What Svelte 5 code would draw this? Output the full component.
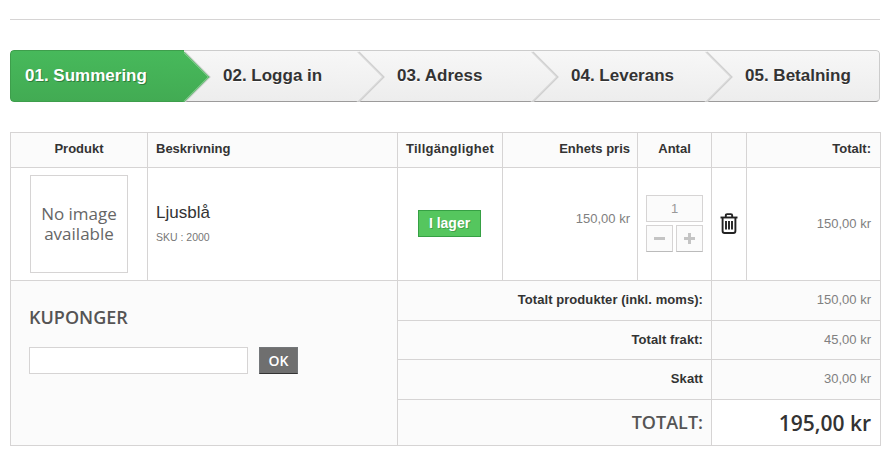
<script>
  const steps = ["01. Summering", "02. Logga in", "03. Adress", "04. Leverans", "05. Betalning"];
  const totals = [
    { label: "Totalt produkter (inkl. moms):", value: "150,00 kr" },
    { label: "Totalt frakt:", value: "45,00 kr" },
    { label: "Skatt", value: "30,00 kr" }
  ];
</script>

<div class="page">
  <hr />

  <ul class="steps">
    {#each steps as step, i}
      <li class="step" class:active={i === 0}><span>{step}</span></li>
    {/each}
  </ul>

  <table>
    <colgroup>
      <col class="c-product" />
      <col class="c-desc" />
      <col class="c-avail" />
      <col class="c-unit" />
      <col class="c-qty" />
      <col class="c-del" />
      <col class="c-total" />
    </colgroup>
    <thead>
      <tr>
        <th class="center">Produkt</th>
        <th>Beskrivning</th>
        <th class="center wide">Tillgänglighet</th>
        <th class="right unit">Enhets pris</th>
        <th class="center">Antal</th>
        <th></th>
        <th class="right end">Totalt:</th>
      </tr>
    </thead>
    <tbody>
      <tr class="item">
        <td><div class="noimage">No image available</div></td>
        <td class="desc">
          <div class="name">Ljusblå</div>
          <div class="sku">SKU : 2000</div>
        </td>
        <td class="center"><span class="stock">I lager</span></td>
        <td class="right price up unit">150,00 kr</td>
        <td>
          <div class="qty">
            <input type="text" value="1" />
            <button aria-label="minus"><span class="bar"></span></button>
            <button aria-label="plus"><span class="bar"></span><span class="bar v"></span></button>
          </div>
        </td>
        <td class="center trash">
          <svg width="18" height="21" viewBox="0 0 18 21" fill="none" stroke="#222" stroke-width="1.9">
            <path d="M0.5 4.5h17" />
            <path d="M5.8 4.5V2.4q0-1.3 1.3-1.3h3.8q1.3 0 1.3 1.3v2.1" />
            <path d="M2.6 4.5V18q0 2 2 2h8.8q2 0 2-2V4.5" />
            <path d="M6 8v8.5M9 8v8.5M12 8v8.5" />
          </svg>
        </td>
        <td class="right price end">150,00 kr</td>
      </tr>
    </tbody>
    <tfoot>
      <tr class="sum">
        <td class="coupon" colspan="2" rowspan="4">
          <h3>KUPONGER</h3>
          <form class="coupon-form">
            <input type="text" />
            <button type="button">OK</button>
          </form>
        </td>
        <td class="right label" colspan="3">{totals[0].label}</td>
        <td class="right price end" colspan="2">{totals[0].value}</td>
      </tr>
      {#each totals.slice(1) as row}
        <tr class="sum">
          <td class="right label" colspan="3">{row.label}</td>
          <td class="right price end" colspan="2">{row.value}</td>
        </tr>
      {/each}
      <tr class="grand">
        <td class="right big-label" colspan="3">TOTALT:</td>
        <td class="right big-value end" colspan="2">195,00 kr</td>
      </tr>
    </tfoot>
  </table>
</div>

<style>
  :global(body) {
    margin: 0;
    background: #fff;
  }

  .page {
    padding: 19px 14px 0 10px;
    width: 870px;
    font-family: "Liberation Sans", Arial, sans-serif;
    color: #333;
  }

  hr {
    margin: 0 0 30px;
    border: 0;
    border-top: 1px solid #d6d4d4;
  }

  .steps {
    display: flex;
    margin: 0 0 30px;
    padding: 0;
    list-style: none;
    height: 52px;
    overflow: hidden;
    border-radius: 4px;
  }

  .step {
    position: relative;
    flex: 0 0 174px;
    box-sizing: border-box;
    display: flex;
    align-items: center;
    padding-left: 39px;
    border-top: 1px solid #ccc;
    border-bottom: 1px solid #9c9b9b;
    background: linear-gradient(#f7f7f7, #ededed);
    font-size: 17px;
    font-weight: bold;
    color: #333;
    text-shadow: 0 1px #fff;
  }

  .step span {
    position: relative;
    z-index: 5;
  }

  .step:first-child {
    padding-left: 14px;
    border-left: 1px solid #3e9e4c;
    border-radius: 4px 0 0 4px;
  }

  .step:last-child {
    border-right: 1px solid #ccc;
    border-radius: 0 4px 4px 0;
  }

  .step:not(:last-child)::after {
    content: "";
    position: absolute;
    z-index: 2;
    top: 7.5px;
    right: -18px;
    width: 35px;
    height: 35px;
    transform: rotate(45deg);
    background: linear-gradient(135deg, #f7f7f7, #ededed);
    border-top: 1px solid #d4d4d4;
    border-right: 1px solid #d4d4d4;
    box-shadow: 1px -1px 0 #cfcfcf;
  }

  .step.active {
    background: linear-gradient(#47b95b, #42ab53);
    border-top-color: #3e9e4c;
    border-bottom-color: #3e9e4c;
    color: #fff;
    text-shadow: 1px 1px #2f7f3c;
  }

  .step.active::after {
    background: linear-gradient(135deg, #47b95b, #42ab53);
    border-color: #5cb96a;
    box-shadow: 1px -1px 0 #cfcfcf;
  }

  table {
    table-layout: fixed;
    width: 870px;
    border-collapse: collapse;
    font-size: 13px;
  }

  .c-product {
    width: 137px;
  }

  .c-desc {
    width: 250px;
  }

  .c-avail {
    width: 105px;
  }

  .c-unit {
    width: 135px;
  }

  .c-qty {
    width: 74px;
  }

  .c-del {
    width: 35px;
  }

  .c-total {
    width: 134px;
  }

  th,
  td {
    border: 1px solid #d6d4d4;
    padding: 0 8px;
  }

  th {
    box-sizing: border-box;
    height: 35px;
    padding-bottom: 3px;
    background: #fbfbfb;
    font-size: 13px;
    font-weight: bold;
    text-align: left;
    color: #333;
  }

  .wide {
    letter-spacing: 0.28px;
    padding: 0 0 3px;
  }

  .center {
    text-align: center;
  }

  th.right,
  .right {
    text-align: right;
  }

  .unit {
    padding-right: 7px;
  }

  .end {
    padding-right: 9px;
  }

  .item td {
    box-sizing: border-box;
    height: 113px;
    background: #fff;
  }

  .noimage {
    box-sizing: border-box;
    display: flex;
    align-items: center;
    justify-content: center;
    margin-left: 11px;
    width: 98px;
    height: 98px;
    padding: 0 8px;
    border: 1px solid #d6d4d4;
    font-family: "Open Sans", sans-serif;
    font-size: 17px;
    line-height: 20px;
    text-align: center;
    color: #666;
  }

  .item .desc {
    padding-bottom: 2px;
  }

  .name {
    font-size: 17px;
    color: #333;
    margin-bottom: 8px;
  }

  .sku {
    font-size: 10.5px;
    color: #777;
  }

  .stock {
    display: inline-block;
    box-sizing: border-box;
    width: 63px;
    height: 27px;
    margin: 0 0 2px -1px;
    border: 1px solid #36a044;
    background: #55c65e;
    color: #fff;
    font-size: 14px;
    font-weight: bold;
    line-height: 25px;
    text-shadow: 1px 1px rgba(0, 0, 0, 0.2);
  }

  .price {
    color: #808080;
    padding-bottom: 2px;
  }

  .up {
    padding-bottom: 12px;
  }

  .qty {
    display: grid;
    grid-template-columns: 27px 27px;
    gap: 3px;
    width: 57px;
    margin-bottom: 2px;
  }

  .qty input {
    grid-column: 1 / 3;
    box-sizing: border-box;
    width: 57px;
    height: 27px;
    border: 1px solid #d6d4d4;
    background: #fbfbfb;
    color: #999;
    font: 13px "Liberation Sans", Arial, sans-serif;
    text-align: center;
    padding: 0;
  }

  .qty button {
    position: relative;
    box-sizing: border-box;
    width: 27px;
    height: 27px;
    padding: 0;
    background: #fbfbfb;
    border: 1px solid #d6d4d4;
    border-bottom-color: #bbb;
  }

  .bar {
    position: absolute;
    left: 7px;
    top: 11px;
    width: 11px;
    height: 3px;
    background: #c4c4c4;
  }

  .bar.v {
    left: 11px;
    top: 7px;
    width: 3px;
    height: 11px;
  }

  .trash {
    padding: 0;
  }

  .trash svg {
    display: block;
    margin-left: 8px;
    position: relative;
    top: -1px;
  }

  .sum td {
    box-sizing: border-box;
    height: 40px;
    background: #fbfbfb;
  }

  .sum + .sum td {
    height: 39px;
  }

  .sum + .sum + .sum td {
    height: 40px;
  }

  .grand td {
    box-sizing: border-box;
    height: 46px;
    background: #fbfbfb;
  }

  .coupon {
    vertical-align: top;
    padding: 25px 18px 0;
    background: #fbfbfb;
  }

  h3 {
    margin: 0 0 18px;
    font-family: "Open Sans", sans-serif;
    font-size: 18px;
    font-weight: 600;
    line-height: 23px;
    color: #555454;
  }

  .coupon-form {
    display: flex;
    gap: 11px;
  }

  .coupon-form input {
    box-sizing: border-box;
    width: 219px;
    height: 27px;
    border: 1px solid #d6d4d4;
    background: #fff;
  }

  .coupon-form button {
    box-sizing: border-box;
    width: 39px;
    height: 27px;
    padding: 0;
    border: 1px solid #74777a;
    border-bottom-color: #333;
    background: #6f6f6f;
    color: #fff;
    font-family: "Open Sans", sans-serif;
    font-size: 14px;
    font-weight: 600;
  }

  .label {
    font-weight: bold;
    color: #333;
    letter-spacing: 0.07px;
    padding-bottom: 2px;
  }

  .big-label {
    font-family: "Open Sans", sans-serif;
    font-size: 18px;
    font-weight: 600;
    color: #555454;
    padding-bottom: 2px;
  }

  .grand .big-value {
    font-family: "Open Sans", sans-serif;
    font-size: 21px;
    font-weight: 600;
    color: #333;
    background: #fff;
  }
</style>
